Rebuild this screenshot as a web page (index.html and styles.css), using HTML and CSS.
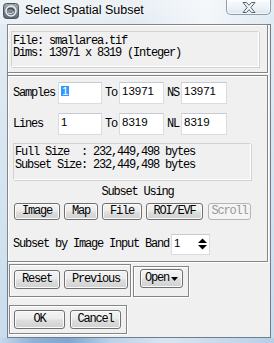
FILE: index.html
```html
<!DOCTYPE html>
<html>
<head>
<meta charset="utf-8">
<title>Select Spatial Subset</title>
<link rel="stylesheet" href="styles.css">
</head>
<body>
<div class="window">
  <div class="titlebar">
    <svg class="app-icon" width="16" height="16" viewBox="0 0 16 16">
      <defs>
        <linearGradient id="ig" x1="0" y1="0" x2="0" y2="1">
          <stop offset="0" stop-color="#a4acb4"/>
          <stop offset="1" stop-color="#5a646e"/>
        </linearGradient>
      </defs>
      <rect x="0.5" y="0.5" width="15" height="15" rx="3" fill="url(#ig)" stroke="#4b545d"/>
      <circle cx="8" cy="8" r="5" fill="none" stroke="#eef1f4" stroke-width="1.4"/>
      <path d="M4.5 6.5 Q8 4 11.5 7.5" fill="none" stroke="#3f4850" stroke-width="1.2"/>
      <path d="M5 10 Q8.5 12 11 9" fill="none" stroke="#d6dbe0" stroke-width="1"/>
    </svg>
    <span class="title">Select Spatial Subset</span>
    <div class="close-btn">
      <svg width="14" height="11" viewBox="0 0 14 11">
        <polygon points="1,0.5 4.5,0.5 7,3.3 9.5,0.5 13,0.5 8.9,5.5 13,10.5 9.5,10.5 7,7.7 4.5,10.5 1,10.5 5.1,5.5" fill="#f3f5f7" stroke="#56626e" stroke-width="1" stroke-linejoin="round"/>
      </svg>
    </div>
  </div>

  <div class="client">
    <div class="panel panel-file">
      <div class="infobox file-box">
        <div class="line">File: smallarea.tif</div>
        <div class="line">Dims: 13971 x 8319 (Integer)</div>
      </div>
    </div>

    <div class="panel panel-subset">
      <div class="range-grid">
        <span class="lbl">Samples</span>
        <div class="field"><span class="sel">1</span></div>
        <span class="lbl lbl-mid">To</span>
        <div class="field">13971</div>
        <span class="lbl lbl-mid">NS</span>
        <div class="field">13971</div>

        <span class="lbl">Lines</span>
        <div class="field">1</div>
        <span class="lbl lbl-mid">To</span>
        <div class="field">8319</div>
        <span class="lbl lbl-mid">NL</span>
        <div class="field">8319</div>
      </div>

      <div class="infobox size-box">
        <div class="line">Full Size  : 232,449,498 bytes</div>
        <div class="line">Subset Size: 232,449,498 bytes</div>
      </div>

      <div class="caption">Subset Using</div>

      <div class="btn-row">
        <button class="btn w-image">Image</button>
        <button class="btn w-map">Map</button>
        <button class="btn w-file">File</button>
        <button class="btn w-roi">ROI/EVF</button>
        <button class="btn w-scroll btn-disabled">Scroll</button>
      </div>

      <div class="band-row">
        <span class="band-label">Subset by Image Input Band</span>
        <div class="spin">
          <span class="spin-value">1</span>
          <svg class="spin-arrows" width="9" height="12" viewBox="0 0 9 12">
            <polygon points="0,5 4.5,0.5 9,5" fill="#000"/>
            <polygon points="0,7 4.5,11.5 9,7" fill="#000"/>
          </svg>
        </div>
      </div>
    </div>

    <div class="bottom-row">
      <div class="panel panel-reset">
        <button class="btn tall w-reset">Reset</button>
        <button class="btn tall w-prev">Previous</button>
      </div>
      <div class="panel panel-open">
        <button class="btn tall w-open">Open<svg class="drop" width="7" height="4" viewBox="0 0 7 4"><polygon points="0,0 7,0 3.5,4" fill="#000"/></svg></button>
      </div>
    </div>

    <div class="panel panel-ok">
      <button class="btn tall w-ok">OK</button>
      <button class="btn tall w-cancel">Cancel</button>
    </div>
  </div>
  <div class="frame-bottom"></div>
</div>
</body>
</html>
```

FILE: styles.css
```css
* {
  box-sizing: border-box;
}

html, body {
  margin: 0;
  padding: 0;
}

body {
  width: 274px;
  height: 343px;
  overflow: hidden;
  background: linear-gradient(180deg, #eaf0f5 0%, #e1ebf3 10%, #d3e3f0 60%, #c9dcec 100%);
  font-family: "Liberation Mono", monospace;
  font-size: 12px;
  color: #000;
}

.window {
  display: flex;
  flex-direction: column;
  height: 343px;
}

/* ---------- title bar ---------- */
.titlebar {
  height: 24px;
  display: flex;
  align-items: flex-start;
  background: linear-gradient(90deg, rgba(255,255,255,0.25) 0%, rgba(255,255,255,0.0) 50%, rgba(255,255,255,0.55) 75%, rgba(210,228,240,0.3) 100%);
}

.app-icon {
  margin: 3px 0 0 3px;
  flex: none;
}

.title {
  margin: 2px 0 0 6px;
  font-family: "Liberation Sans", sans-serif;
  font-size: 12.5px;
  line-height: 16px;
  color: #000;
  text-shadow: 0 0 6px #fff, 0 0 10px #fff, 0 0 14px #fff;
}

.close-btn {
  margin: 0 3px 0 auto;
  width: 45px;
  height: 15px;
  border: 1px solid #8d9cac;
  border-top: none;
  border-radius: 0 0 5px 5px;
  background: linear-gradient(180deg, #f9fbfd 0%, #eef3f7 50%, #dde6ee 100%);
  box-shadow: inset 0 0 0 1px rgba(255,255,255,0.7);
  display: flex;
  align-items: center;
  justify-content: center;
}

/* ---------- client area ---------- */
.client {
  margin-left: 7px;
  width: 264px;
  height: 314px;
  border: 1px solid #6f7e8d;
  background: #f0f0f0;
  display: flex;
  flex-direction: column;
  align-items: flex-start;
}

.panel {
  border: 1px solid #858585;
  box-shadow: inset 1px 1px 0 #ffffff, 1px 1px 0 #ffffff;
}

.panel-file {
  margin: -1px 0 0 -1px;
  width: 261px;
  height: 49px;
  padding: 6px 0 0 3px;
}

.infobox {
  border: 1px solid #d2d2d2;
  border-right-color: #ffffff;
  border-bottom-color: #ffffff;
  box-shadow: 1px 1px 0 #d2d2d2;
  background: #f0f0f0;
  letter-spacing: -1.2px;
  font-family: "Liberation Mono", monospace;
  font-size: 12px;
}

.infobox .line {
  white-space: pre;
}

.file-box {
  width: 248px;
  height: 36px;
  padding: 3px 1px 0;
  line-height: 12px;
}

.panel-subset {
  margin: 2px 0 0 -1px;
  width: 261px;
  height: 187px;
  padding: 6px 0 0 5px;
  display: flex;
  flex-direction: column;
  align-items: flex-start;
}

.range-grid {
  display: grid;
  grid-template-columns: 45px 44px 17px 45px 17px 46px;
  grid-auto-rows: 22px;
  row-gap: 9px;
  align-items: center;
}

.lbl {
  letter-spacing: -1.2px;
  line-height: 13px;
  white-space: nowrap;
}

.lbl-mid {
  padding-left: 3px;
}

.field {
  height: 22px;
  background: #ffffff;
  border: 1px solid #d8dde3;
  border-top-color: #c5cbd2;
  padding: 3px 2px 0 2px;
  font-family: "Liberation Sans", sans-serif;
  font-size: 11.5px;
  line-height: 10px;
}

.sel {
  display: inline-block;
  height: 10px;
  line-height: 10px;
  padding: 0 1px;
  background: #3399ff;
  color: #ffffff;
}

.size-box {
  margin-top: 8px;
  width: 238px;
  height: 37px;
  padding: 2px 1px 0;
  line-height: 13px;
}

.caption {
  align-self: center;
  margin: 6px 0 0 -5px;
  line-height: 13px;
  letter-spacing: -1.2px;
}

.btn-row {
  margin: 4px 0 0 1px;
  display: flex;
  gap: 4px;
}

.btn {
  height: 17px;
  margin: 0;
  padding: 0;
  border: 1px solid #707070;
  border-radius: 3px;
  background: linear-gradient(180deg, #f4f4f4 0%, #ececec 45%, #dedede 55%, #d0d0d0 100%);
  box-shadow: inset 0 0 0 1px #fbfbfb;
  font-family: "Liberation Mono", monospace;
  font-size: 12px;
  line-height: 13px;
  letter-spacing: -1.2px;
  color: #000;
  display: flex;
  align-items: center;
  justify-content: center;
}

.btn.tall {
  height: 19px;
}

.btn-disabled {
  border-color: #b2b6b9;
  background: #f4f4f4;
  box-shadow: none;
  color: #9a9a9a;
}

.w-image { width: 46px; }
.w-map { width: 34px; }
.w-file { width: 40px; }
.w-roi { width: 57px; }
.w-scroll { width: 43px; margin-left: 1px; }
.w-reset { width: 46px; }
.w-prev { width: 64px; }
.w-open { width: 43px; }
.w-ok { width: 51px; }
.w-cancel { width: 51px; }

.band-row {
  margin-top: 14px;
  display: flex;
  align-items: center;
  height: 21px;
}

.band-label {
  letter-spacing: -1.2px;
  line-height: 13px;
  white-space: nowrap;
}

.spin {
  margin-left: 2px;
  width: 39px;
  height: 21px;
  background: #ffffff;
  border: 1px solid #d8dde3;
  border-top-color: #c5cbd2;
  display: flex;
  align-items: flex-start;
}

.spin-value {
  margin: 3px 0 0 2px;
  font-family: "Liberation Sans", sans-serif;
  font-size: 11.5px;
  line-height: 10px;
}

.spin-arrows {
  margin: 3px 2px 0 auto;
}

/* ---------- bottom panels ---------- */
.bottom-row {
  margin: 2px 0 0 1px;
  display: flex;
  align-items: flex-start;
}

.panel-reset {
  width: 122px;
  height: 33px;
  padding: 5px 0 0 4px;
  display: flex;
  gap: 4px;
  align-items: flex-start;
}

.panel-open {
  margin: 2px 0 0 2px;
  width: 56px;
  height: 31px;
  padding: 2px 0 0 6px;
}

.w-open .drop {
  margin-left: 2px;
}

.panel-ok {
  margin: 8px 0 0 1px;
  width: 118px;
  height: 29px;
  padding: 4px 0 0 4px;
  display: flex;
  gap: 5px;
  align-items: flex-start;
}

.frame-bottom {
  flex: 1;
  background: linear-gradient(90deg, #c5d9ec 0%, #8fb2d6 12%, #7ea6d0 25%, #b9d1e8 40%, #d7e6f2 60%, #c8dbec 80%, #b6cfe7 100%);
}
```
